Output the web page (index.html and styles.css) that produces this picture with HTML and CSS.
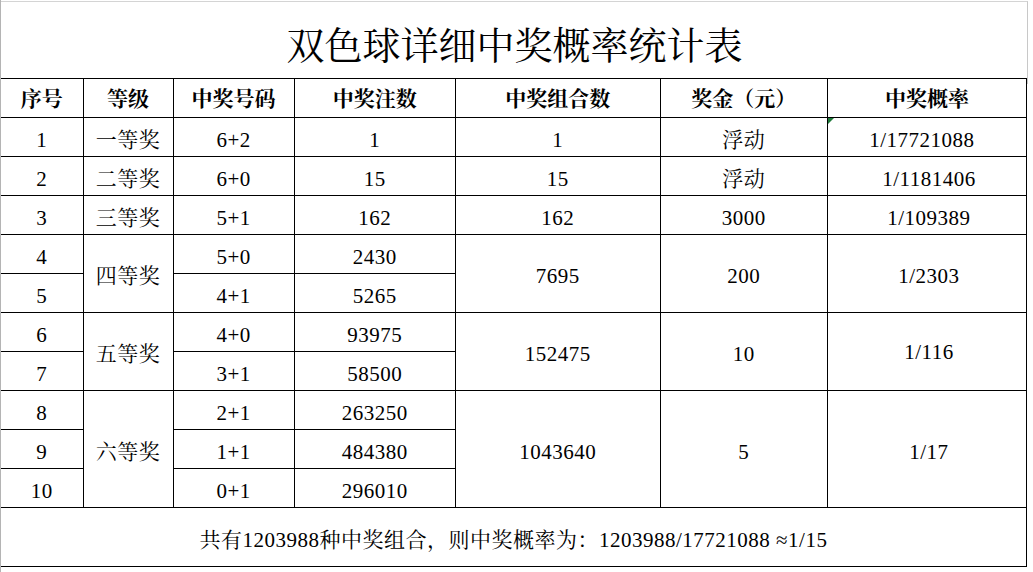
FILE: index.html
```html
<!DOCTYPE html>
<html lang="zh-CN">
<head>
<meta charset="utf-8">
<title>双色球详细中奖概率统计表</title>
<link rel="stylesheet" href="styles.css">
</head>
<body>
<div class="sheet">
  <div class="title">双色球详细中奖概率统计表</div>
  <table class="grid">
    <colgroup>
      <col class="c1"><col class="c2"><col class="c3"><col class="c4"><col class="c5"><col class="c6"><col class="c7">
    </colgroup>
    <thead>
      <tr class="head">
        <th class="first">序号</th><th>等级</th><th>中奖号码</th><th>中奖注数</th><th>中奖组合数</th><th>奖金（元）</th><th>中奖概率</th>
      </tr>
    </thead>
    <tbody>
      <tr><td class="first">1</td><td>一等奖</td><td>6+2</td><td>1</td><td>1</td><td>浮动</td><td class="flag"><span class="tri"></span><span class="shl">1/17721088</span></td></tr>
      <tr><td class="first">2</td><td>二等奖</td><td>6+0</td><td>15</td><td>15</td><td>浮动</td><td><span class="shr">1/1181406</span></td></tr>
      <tr><td class="first">3</td><td>三等奖</td><td>5+1</td><td>162</td><td>162</td><td>3000</td><td><span class="shr">1/109389</span></td></tr>
      <tr><td class="first">4</td><td rowspan="2">四等奖</td><td>5+0</td><td>2430</td><td rowspan="2">7695</td><td rowspan="2">200</td><td rowspan="2"><span class="shr">1/2303</span></td></tr>
      <tr><td class="first">5</td><td>4+1</td><td>5265</td></tr>
      <tr><td class="first">6</td><td rowspan="2">五等奖</td><td>4+0</td><td>93975</td><td rowspan="2">152475</td><td rowspan="2">10</td><td rowspan="2" class="up"><span class="shr">1/116</span></td></tr>
      <tr><td class="first">7</td><td>3+1</td><td>58500</td></tr>
      <tr><td class="first">8</td><td rowspan="3">六等奖</td><td>2+1</td><td>263250</td><td rowspan="3">1043640</td><td rowspan="3">5</td><td rowspan="3"><span class="shr">1/17</span></td></tr>
      <tr><td class="first">9</td><td>1+1</td><td>484380</td></tr>
      <tr><td class="first">10</td><td>0+1</td><td>296010</td></tr>
      <tr class="foot"><td class="first" colspan="7">共有1203988种中奖组合，则中奖概率为：1203988/17721088 ≈1/15</td></tr>
    </tbody>
  </table>
</div>
</body>
</html>
```
FILE: styles.css
```css
html, body {
  margin: 0;
  padding: 0;
  background: #ffffff;
}

.sheet {
  width: 1033px;
  height: 572px;
  overflow: hidden;
  box-sizing: border-box;
  padding-top: 1px;
  border-left: 1px solid #b4b4b4;
  color: #000;
  font-family: "Liberation Serif", "Noto Serif CJK SC", "Noto Sans CJK SC", serif;
}

.title {
  width: 1025px;
  height: 76px;
  border-top: 1px solid #d4d4d4;
  border-right: 1px solid #c8c8c8;
  box-sizing: content-box;
  display: flex;
  align-items: center;
  justify-content: center;
  padding-left: 1px;
  font-size: 38px;
  line-height: 1;
  padding-top: 6px;
  margin-bottom: -6px;
}

.grid {
  border-collapse: collapse;
  table-layout: fixed;
  width: 1026px;
}

.c1 { width: 82px; }
.c2 { width: 90px; }
.c3 { width: 121px; }
.c4 { width: 161px; }
.c5 { width: 205px; }
.c6 { width: 167px; }
.c7 { width: 199px; }

.grid th,
.grid td {
  border: 1px solid #000;
  padding: 5px 0 0;
  text-align: center;
  vertical-align: middle;
  font-size: 21px;
  line-height: 22px;
  letter-spacing: 0.5px;
  white-space: nowrap;
}

.grid th {
  font-weight: bold;
  padding-top: 2px;
  letter-spacing: 0;
}

.grid .first {
  border-left: none;
}

.grid tr {
  height: 39px;
}

.grid tr.foot {
  height: 59px;
}

.grid tr.foot td {
  padding-top: 5px;
}

.flag {
  position: relative;
}

.tri {
  position: absolute;
  left: 0;
  top: 0;
  width: 0;
  height: 0;
  border-top: 6px solid #1f7a3a;
  border-right: 6px solid transparent;
}

.shl {
  display: inline-block;
  margin-left: -10px;
}

.shr {
  display: inline-block;
  margin-left: 4px;
}

.up {
  padding-top: 0 !important;
}
```
